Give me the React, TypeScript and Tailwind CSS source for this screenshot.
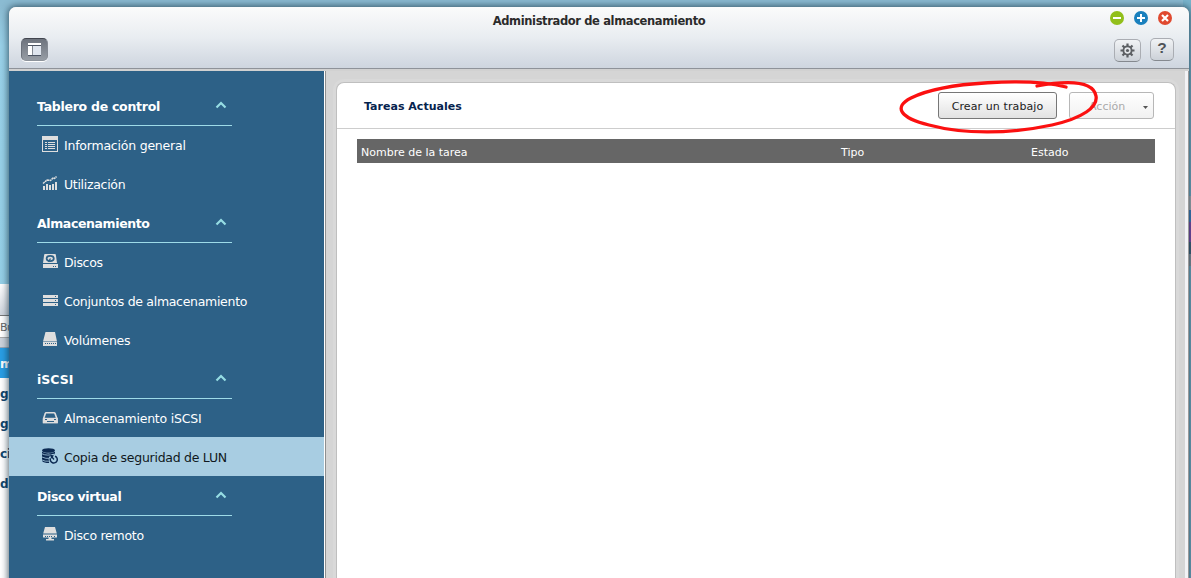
import React from "react";

const ink = "#dedede";

function InfoIcon() {
  return (
    <svg width="16" height="16" viewBox="0 0 16 16" shapeRendering="crispEdges">
      <path fill={ink} fillRule="evenodd" d="M0 0h16v16H0zM1 4v11h14V4z" />
      <path fill={ink} d="M3 6h2v1H3zM6 6h7v1H6zM3 8h2v1H3zM6 8h7v1H6zM3 10h2v1H3zM6 10h7v1H6zM3 12h2v1H3zM6 12h7v1H6z" />
    </svg>
  );
}

function UsageIcon() {
  return (
    <svg width="16" height="16" viewBox="0 0 16 16">
      <path fill={ink} shapeRendering="crispEdges" d="M1 11h2v4H1zM4 9h2v6H4zM7 10h2v5H7zM10 9h2v6h-2zM13 7h2v8h-2z" />
      <path d="M1 8.500L5 5L8.500 5.500L11 3L12.500 3.500L14.500 1.500" fill="none" stroke={ink} strokeWidth="1.500" strokeDasharray="2.200 .4" />
    </svg>
  );
}

function DiskIcon() {
  return (
    <svg width="16" height="16" viewBox="0 0 16 16">
      <path fill={ink} d="M3 1h10q.7 0 .8.600L15 10H1L2.200 1.600Q2.300 1 3 1zM1 11h15v4H1z" />
      <ellipse cx="8.200" cy="5.500" rx="3.600" ry="2.600" fill="none" stroke="#2d6187" strokeWidth="1.700" />
      <path d="M8.500 5.500L6.500 8.800" stroke="#2d6187" strokeWidth="1.400" />
      <path fill="#2d6187" d="M11 13h1v1h-1zM13 13h1v1h-1z" />
    </svg>
  );
}

function PoolIcon() {
  return (
    <svg width="16" height="16" viewBox="0 0 16 16" shapeRendering="crispEdges">
      <path fill={ink} d="M1 3h15v3H1zM1 7h15v3H1zM1 11h15v3H1z" />
      <path fill="#2d6187" d="M13 4h1v1h-1zM13 8h1v1h-1zM13 12h1v1h-1z" />
    </svg>
  );
}

function VolumeIcon() {
  return (
    <svg width="16" height="16" viewBox="0 0 16 16">
      <path fill={ink} d="M3.500 1h9.500l2 9.500H1zM1 11h14v4H1z" />
      <path fill="#2d6187" shapeRendering="crispEdges" d="M3 12h1v1H3zM5 12h1v1H5zM7 12h1v1H7zM9 12h1v1H9zM11 12h1v1h-1zM13 12h1v1h-1z" />
    </svg>
  );
}

function IscsiIcon() {
  return (
    <svg width="16" height="16" viewBox="0 0 16 16">
      <path d="M4.200 3.800h7.800q.8 0 1.100.8L15 10v3.500H1.500V10l1.800-5.400Q3.500 3.800 4.200 3.800z" fill="none" stroke={ink} strokeWidth="1.600" />
      <path d="M1 8.800h14.800v5.400H1z" fill={ink} />
      <path d="M3 10.500h2M12 10.500h2M5 12.500h7" stroke="#2d6187" strokeWidth="1" />
    </svg>
  );
}

function BackupIcon() {
  return (
    <svg width="16" height="16" viewBox="0 0 16 16">
      <ellipse cx="6.500" cy="2.500" rx="6.500" ry="2.300" fill="#0c2a52" />
      <path d="M0 3.800Q6 7 13 3.800V7.500L8 9 7 15Q2 15 0 13z" fill="#0c2a52" />
      <path d="M0 5.800Q5 8.300 13 6M0 9Q4 11 7.500 10.300M0 12Q3 13.600 7 13.200" stroke="#a8cde2" strokeWidth=".8" fill="none" />
      <circle cx="11.700" cy="11.300" r="5" fill="#a8cde2" />
      <path d="M13 8.200A3.500 3.500 0 1 1 8.500 10.200" stroke="#0c2a52" strokeWidth="1.500" fill="none" />
      <path d="M8 6.500L12 7.500L9.200 10.800z" fill="#0c2a52" />
      <path d="M9.500 8.500L12 11.500" stroke="#0c2a52" strokeWidth="1.200" />
    </svg>
  );
}

function RemoteIcon() {
  return (
    <svg width="16" height="16" viewBox="0 0 16 16">
      <path fill={ink} d="M3 1h10l1.800 6.500H1.200zM1 8.500h14v2.500q0 .5-.6.500H1.600Q1 11.500 1 11zM6.500 11.500h3v1.500h-3zM4 13h8v1.500H4z" />
      <path fill="#2d6187" shapeRendering="crispEdges" d="M3 10h1v1H3zM5 10h1v1H5zM7 10h1v1H7zM9 10h1v1H9zM12 10h1v1h-1z" />
    </svg>
  );
}

function Section({ title, spacing, children }: { title: string; spacing: string; children: React.ReactNode }) {
  return (
    <section>
      <h2 className="-mb-px ml-7 flex h-[40px] w-[195px] items-center justify-between border-b border-[#9edbe8] pt-[3px] text-[12.5px] font-bold text-white">
        <span className={spacing}>{title}</span>
        <svg className="mr-[5px] mb-1" width="12" height="8" viewBox="0 0 12 8">
          <path d="M1.500 6.500L6 2L10.500 6.500" fill="none" stroke="#96dde3" strokeWidth="2.200" />
        </svg>
      </h2>
      {children}
    </section>
  );
}

function Item({ icon, label, spacing, active = false }: { icon: React.ReactNode; label: string; spacing: string; active?: boolean }) {
  return (
    <div className={`flex h-[39px] items-center gap-[6px] pl-[33px] text-[12.5px] ${active ? "bg-[#a8cde2] text-[#101820]" : "text-white"}`}>
      <span className="mb-[2px] shrink-0">{icon}</span>
      <span className={`pt-[4px] whitespace-nowrap ${spacing}`}>{label}</span>
    </div>
  );
}

function BackWindow() {
  return (
    <div className="absolute top-[284px] left-0 h-[294px] w-5 overflow-hidden bg-white text-[12px] font-bold text-[#12466d]">
      <div className="h-8 border-b border-[#777] bg-linear-to-b from-white to-[#ced4dc]" />
      <div className="flex h-[22px] items-center border-b border-[#aaa] bg-white pt-[3px] text-[11px] font-normal tracking-[-0.5px] text-[#666]">Bu</div>
      <div className="h-[10px] border-b border-[#9aa7b5] bg-[#ccd3db]" />
      <div className="flex h-[30px] items-center bg-[#299ee4] pt-[2px] text-white">m</div>
      <div className="flex h-[30px] items-center pt-[2px]">g</div>
      <div className="flex h-[30px] items-center pt-[2px]">g</div>
      <div className="flex h-[30px] items-center pt-[2px]">ci</div>
      <div className="flex h-[30px] items-center pt-[2px]">d</div>
    </div>
  );
}

export default function App() {
  return (
    <div className="relative h-[578px] w-[1191px] overflow-hidden bg-linear-to-b from-[#8bbbd2] from-[1%] via-[#99d1e8] via-[8%] to-[#8fcde4] pt-[7px] pl-[9px] font-['Verdana','DejaVu_Sans',sans-serif]">
      <BackWindow />
      <div className="absolute top-0 right-0 h-[578px] w-2 bg-[#79b4cc]">
        <div className="mt-[196px] h-[14px] bg-[#b2b8bc]" />
        <div className="h-3 bg-[#3f81c5]" />
        <div className="h-5 bg-[#834cb2]" />
        <div className="h-3 bg-[#41647d]" />
        <div className="h-3 bg-[#8b97a0]" />
      </div>

      <div className="relative flex h-[580px] w-[1180px] flex-col overflow-hidden rounded-t-[7px] bg-[#d5d5d5] shadow-[0_0_7px_1px_rgba(15,40,55,.7)]">
        <header className="h-[62px] shrink-0 border-b border-[#8e9299] bg-linear-to-b from-[#fbfbfb] via-[#e9edf1] to-[#ced5df]">
          <div className="flex h-[27px] items-center">
            <h1 className="w-[1180px] shrink-0 pt-[3px] text-center text-[11.5px] font-bold tracking-[-0.37px] text-[#2b2b2b]">Administrador de almacenamiento</h1>
            <div className="-ml-[79px] flex shrink-0 gap-[10px] pb-[5px]">
              <svg width="14" height="14" viewBox="0 0 14 14"><circle cx="7" cy="7" r="7" fill="#92bf1b" /><path d="M3 7h8" stroke="white" strokeWidth="2" /></svg>
              <svg width="14" height="14" viewBox="0 0 14 14"><circle cx="7" cy="7" r="7" fill="#1a80bd" /><path d="M3 7h8M7 3v8" stroke="white" strokeWidth="2" /></svg>
              <svg width="14" height="14" viewBox="0 0 14 14"><circle cx="7" cy="7" r="7" fill="#e0492f" /><path d="M4 4l6 6M10 4l-6 6" stroke="white" strokeWidth="2.200" /></svg>
            </div>
          </div>
          <div className="flex items-start justify-between pt-1 pr-[15px] pl-3">
            <button className="flex h-[23px] w-[27px] items-center justify-center rounded-[5px] border border-t-[#41454e] border-r-[#858b94] border-b-[#8d939b] border-l-[#6b717b] bg-linear-to-b from-[#6d737d] to-[#979da5] shadow-[0_1px_0_#fff]">
              <svg width="13" height="13" viewBox="0 0 13 13" shapeRendering="crispEdges"><path fill="#fff" d="M0 0h13v2H0zM0 3h4v9H0z" /><path fill="#dfe5ee" d="M5 3h8v9H5z" /><path fill="#4c5564" d="M0 2h13v1H0zM0 12h13v1H0z" /></svg>
            </button>
            <div className="flex gap-[9px]">
              <button className="mt-px flex h-[23px] w-[27px] items-center justify-center rounded-[5px] border border-[#aaadb3] border-b-[#85898f] bg-linear-to-b from-[#f1f3f5] to-[#ccd1d8]">
                <svg width="15" height="15" viewBox="0 0 15 15">
                  <path d="M7.500 .5v14M.5 7.500h14M2.500 2.500l10 10M12.500 2.500l-10 10" stroke="#5c5f63" strokeWidth="2.200" />
                  <circle cx="7.500" cy="7.500" r="4.100" fill="#e5e8eb" stroke="#5c5f63" strokeWidth="1.900" />
                  <circle cx="7.500" cy="7.500" r="1.600" fill="#5c5f63" />
                </svg>
              </button>
              <button className="flex h-[23px] w-6 items-center justify-center rounded-[5px] border border-[#aaadb3] border-b-[#85898f] bg-linear-to-b from-[#f1f3f5] to-[#ccd1d8] pb-[3px] font-['Liberation_Sans',sans-serif] text-[15.5px] leading-none font-bold text-[#505357]">?</button>
            </div>
          </div>
        </header>

        <div className="flex min-h-0 flex-1 border-t-2 border-[#d1d1d1]">
          <nav className="w-[315px] shrink-0 bg-[#2d6187] pt-[15px]">
            <Section title="Tablero de control" spacing="tracking-[-0.27px]">
              <Item icon={<InfoIcon />} label="Información general" spacing="tracking-[-0.22px]" />
              <Item icon={<UsageIcon />} label="Utilización" spacing="tracking-[-0.3px]" />
            </Section>
            <Section title="Almacenamiento" spacing="tracking-[-0.38px]">
              <Item icon={<DiskIcon />} label="Discos" spacing="tracking-[-0.33px]" />
              <Item icon={<PoolIcon />} label="Conjuntos de almacenamiento" spacing="tracking-[-0.3px]" />
              <Item icon={<VolumeIcon />} label="Volúmenes" spacing="tracking-[-0.26px]" />
            </Section>
            <Section title="iSCSI" spacing="tracking-[0px]">
              <Item icon={<IscsiIcon />} label="Almacenamiento iSCSI" spacing="tracking-[-0.2px]" />
              <Item icon={<BackupIcon />} label="Copia de seguridad de LUN" spacing="tracking-[-0.27px]" active />
            </Section>
            <Section title="Disco virtual" spacing="tracking-[-0.33px]">
              <Item icon={<RemoteIcon />} label="Disco remoto" spacing="tracking-[-0.27px]" />
            </Section>
          </nav>
          <div className="w-[2px] shrink-0 border-r border-[#8f8f8f] bg-white" />
          <main className="flex flex-1 bg-[#d5d5d5] pt-[11px] pl-[10px]">
            <div className="w-[840px] shrink-0 rounded-t-[8px] border border-b-0 border-[#bfbfbf] bg-white shadow-[0_0_0_3px_#d9d9d9]">
              <div className="flex h-[46px] items-center border-b border-[#cdcdcd] pr-[21px] pl-[27px]">
                <h2 className="pt-[3px] text-[11px] font-bold tracking-[0.02px] text-[#06234e]">Tareas Actuales</h2>
                <button className="ml-auto flex h-[27px] w-[119px] items-center justify-center rounded-[3px] border border-[#777] bg-linear-to-b from-white to-[#e2e2e2] pt-[3px] text-[11px] tracking-[0.1px] text-[#222]">Crear un trabajo</button>
                <button className="ml-3 flex h-[27px] w-[85px] items-center justify-between rounded-[3px] border border-[#b7b7b7] bg-linear-to-b from-white to-[#f1f1f1] pt-[3px] pr-[5px] pl-[19px] text-[11px] text-[#aaa]">
                  Acción
                  <svg width="5" height="3" viewBox="0 0 5 3"><path d="M0 0h5L2.500 3z" fill="#555" /></svg>
                </button>
              </div>
              <div className="mt-[10px] ml-5 grid h-6 w-[798px] grid-cols-[480px_190px_1fr] items-center bg-[#666] pt-[4px] pl-1 text-[11px] text-white">
                <span>Nombre de la tarea</span>
                <span>Tipo</span>
                <span>Estado</span>
              </div>
            </div>
          </main>
          <div className="w-1 shrink-0 border-r border-[#999] bg-[#f2f2f5]" />
        </div>
      </div>

      <svg className="pointer-events-none absolute top-[70px] left-[890px]" width="220" height="75" viewBox="890 70 220 75">
        <path d="M1066 87C1030 78 945 81 911 98C893 107 900 118 929 125C964 134.500 1010 134 1052 125C1083 118 1098 107 1096 96C1093 80 1065 81 1037 86" fill="none" stroke="#fb1010" strokeWidth="3.300" strokeLinecap="round" />
      </svg>
    </div>
  );
}
